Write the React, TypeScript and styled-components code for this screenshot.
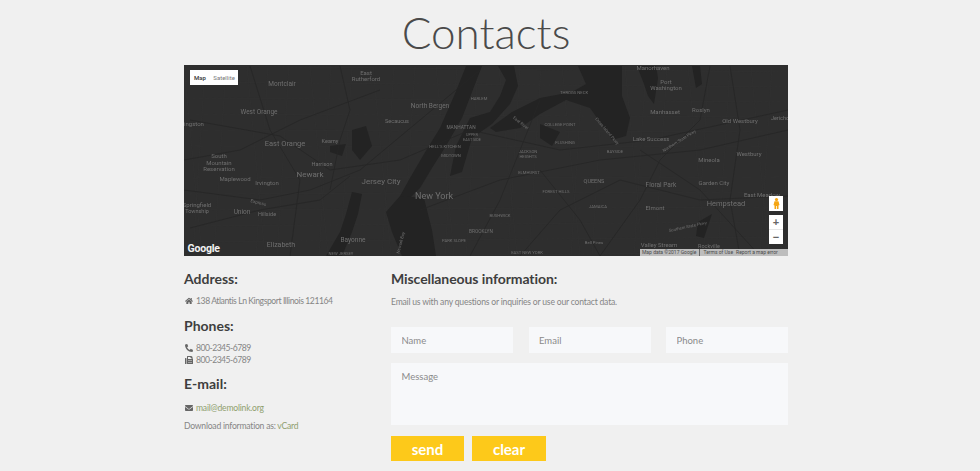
import React from "react";
import styled, { createGlobalStyle } from "styled-components";
import { FaHome, FaPhoneAlt, FaFax, FaEnvelope } from "react-icons/fa";

const Global = createGlobalStyle`
  html, body { margin: 0; padding: 0; background: #f0f0f0; }
  body { font-family: "Lato", "Liberation Sans", sans-serif; color: #7c7c7c; overflow: hidden; }
  * { box-sizing: border-box; }
`;

const Page = styled.div`
  width: 604px;
  margin: 0 auto;
  transform: translateX(-4px);
  height: 471px;
`;
const Title = styled.h1`
  margin: 0;
  height: 65px;
  padding-top: 4px;
  font-size: 44px;
  line-height: 56px;
  font-weight: 300;
  color: #4a4a4a;
  text-align: center;
`;
const MapBox = styled.div`
  position: relative;
  height: 191px;
  background: #2e2e2e;
  overflow: hidden;
`;
const MapSvg = styled.svg`
  display: block;
  width: 100%;
  height: 100%;
  filter: blur(0.35px);
`;
const TypeControl = styled.div`
  position: absolute;
  left: 6px;
  top: 5px;
  width: 48px;
  height: 15px;
  background: #fff;
  display: flex;
  align-items: center;
  font: 6px "Roboto", sans-serif;
`;
const TypeOption = styled.span<{ $active?: boolean }>`
  margin-left: ${(p) => (p.$active ? "4px" : "7.5px")};
  color: ${(p) => (p.$active ? "#333" : "#777")};
  font-weight: ${(p) => (p.$active ? 500 : 400)};
`;
const Logo = styled.span`
  position: absolute;
  left: 3.5px;
  bottom: 1px;
  font: 700 10.5px "Roboto", sans-serif;
  color: #f2f2f2;
  letter-spacing: -0.2px;
`;
const Attribution = styled.div`
  position: absolute;
  right: 0;
  bottom: 0;
  width: 148px;
  height: 7px;
  background: #bdbdbd;
  display: flex;
  align-items: center;
  gap: 3px;
  padding-left: 2px;
  font: 5px/7px "Roboto", sans-serif;
  color: #4a4a4a;
  white-space: nowrap;
`;
const Separator = styled.i`
  width: 1px;
  height: 7px;
  background: #666;
`;
const PegBox = styled.div`
  position: absolute;
  left: 585px;
  top: 131px;
  width: 14px;
  height: 15px;
  background: #fff;
  display: flex;
  align-items: center;
  justify-content: center;
`;
const ZoomBox = styled.div`
  position: absolute;
  left: 585px;
  top: 150px;
  width: 14px;
  height: 29px;
  background: #fff;
  display: flex;
  flex-direction: column;
  color: #666;
  font: 700 11px/14px "Liberation Sans", sans-serif;
  text-align: center;
`;
const ZoomBtn = styled.span`
  flex: 1;
  & + & { border-top: 1px solid #e6e6e6; }
`;
const Columns = styled.div`
  display: grid;
  grid-template-columns: 207px 397px;
  padding-top: 14px;
`;
const Heading = styled.h3<{ $gap?: number; $track?: number }>`
  margin: 0 0 ${(p) => p.$gap ?? 7}px;
  font-size: 14px;
  line-height: 18px;
  font-weight: 700;
  letter-spacing: ${(p) => p.$track ?? 0}px;
  color: #3e3e3e;
`;
const Line = styled.div<{ $track: number }>`
  display: flex;
  align-items: center;
  gap: 3px;
  font-size: 8.6px;
  line-height: 12px;
  letter-spacing: ${(p) => p.$track}px;
  color: #858585;
`;
const Group = styled.div<{ $gap: number }>`
  margin-bottom: ${(p) => p.$gap}px;
`;
const IconSlot = styled.span`
  display: inline-flex;
  width: 9px;
  justify-content: center;
  color: #666;
  font-size: 8px;
`;
const Link = styled.a`
  color: #8f9f6e;
`;
const Download = styled.div`
  margin-top: 6px;
  font-size: 8.6px;
  line-height: 12px;
  letter-spacing: -0.23px;
  color: #858585;
`;
const Intro = styled.p`
  margin: 0 0 19px;
  font-size: 8.6px;
  line-height: 12px;
  letter-spacing: -0.2px;
  color: #858585;
`;
const Fields = styled.div`
  display: grid;
  grid-template-columns: repeat(3, 122px);
  justify-content: space-between;
  margin-bottom: 10px;
`;
const Input = styled.input`
  height: 26px;
  width: 100%;
  border: 0;
  outline: 0;
  background: #f7f8fa;
  padding: 0 10.5px;
  font: 9.5px "Lato", sans-serif;
  &::placeholder { color: #8a8a8a; opacity: 1; }
`;
const Message = styled.textarea`
  display: block;
  width: 100%;
  height: 62px;
  border: 0;
  outline: 0;
  resize: none;
  background: #f7f8fa;
  padding: 8px 10.5px;
  font: 9.5px "Lato", sans-serif;
  &::placeholder { color: #8a8a8a; opacity: 1; }
`;
const Buttons = styled.div`
  display: flex;
  gap: 8px;
  margin-top: 11px;
`;
const Button = styled.button<{ $w: number }>`
  width: ${(p) => p.$w}px;
  height: 25px;
  border: 0;
  padding: 0;
  background: #fdc91a;
  color: #fff;
  font: 700 15px "Lato", sans-serif;
`;

type L = [string, number, number, number, number?];
const labels: L[] = [
  ["East", 366, 75, 6], ["Rutherford", 366, 81, 6], ["Montclair", 282, 86, 6.5], ["West Orange", 259, 114, 6.5],
  ["ingston", 194, 126, 6], ["North Bergen", 430, 108, 6.5], ["Secaucus", 397, 123, 5.5], ["HARLEM", 479, 100, 4.2],
  ["MANHATTAN", 461, 129, 4.8], ["UPPER", 472, 136, 3.8], ["EAST SIDE", 472, 141, 3.8], ["East Orange", 285, 146, 7.5],
  ["Kearny", 330, 143, 5.5], ["HELL'S KITCHEN", 445, 148, 4.2], ["MIDTOWN", 451, 157, 4.2], ["South", 219, 158, 6],
  ["Mountain", 219, 164.5, 6], ["Reservation", 219, 171, 6], ["Harrison", 322, 166, 5.5], ["Newark", 310, 177, 8],
  ["Maplewood", 235, 181, 6], ["Irvington", 267, 185, 6], ["Jersey City", 381, 184, 8], ["New York", 434, 199, 9],
  ["Springfield", 197, 207, 6], ["Township", 197, 213, 5.5], ["Union", 242, 214, 6.5], ["Hillside", 267, 216, 5.5],
  ["Elizabeth", 281, 247, 7], ["Bayonne", 353, 242, 6.5], ["PARK SLOPE", 454, 242, 4.2], ["BROOKLYN", 481, 233, 4.8],
  ["NEW JERSEY", 341, 255, 4.2], ["Manorhaven", 653, 70, 6], ["Port", 666, 83.5, 6], ["Washington", 666, 90, 6],
  ["THROGS NECK", 574, 94, 4.2], ["Manhasset", 665, 114, 6], ["Roslyn", 701, 112, 6], ["Old Westbury", 740, 123, 6],
  ["Jericho", 780, 120, 5.5], ["COLLEGE POINT", 560, 126, 4.2], ["FLUSHING", 565, 144, 4.2], ["Lake Success", 651, 141, 6],
  ["JACKSON", 528, 153, 4.2], ["HEIGHTS", 528, 158, 4.2], ["BAYSIDE", 615, 153, 4.2], ["Mineola", 709, 162, 6],
  ["Westbury", 749, 156, 6], ["ELMHURST", 529, 174, 4.2], ["QUEENS", 594, 183, 5.5], ["Floral Park", 661, 187, 6.5],
  ["Garden City", 714, 185, 6], ["FOREST HILLS", 556, 193, 4.2], ["Hempstead", 726, 206, 7.5], ["East Meadow", 762, 197, 6],
  ["JAMAICA", 598, 208, 4.2], ["Elmont", 655, 210, 6], ["BUSHWICK", 500, 217, 4.2], ["Bell Pines", 594, 244, 4.2],
  ["Valley Stream", 659, 247, 6], ["Rockville", 709, 247.5, 5.5], ["EAST NEW YORK", 527, 254, 4.2],
  ["Express", 258, 204, 4.5, 15], ["East River", 520, 124, 4.2, 38], ["Cross Island Pkwy", 606, 132, 4.2, 50],
  ["Northern State Pkwy", 680, 142, 4.2, -32], ["Southern State Pkwy", 688, 228, 4.2, -12], ["Newark Bay", 402, 243, 4.2, -75],
];

const water = [
  "M466 66 L482 66 L472 92 L462 118 L446 146 L432 168 L420 188 L408 200 L400 196 L410 178 L424 154 L440 128 L454 96 Z",
  "M400 196 L424 198 L432 230 L436 256 L402 256 L392 232 L386 212 Z",
  "M352 192 L362 194 L358 214 L352 232 L342 256 L326 256 L340 232 L346 214 Z",
  "M578 66 L622 66 L622 96 L630 118 L626 136 L612 140 L600 122 L590 108 L566 100 L540 114 L520 128 L496 132 L490 128 L512 112 L540 98 L572 92 L586 84 Z",
  "M470 118 L490 112 L500 96 L506 80 L498 66 L514 66 L518 86 L510 104 L492 124 L472 138 L462 172 L450 176 L456 146 Z",
  "M637 66 L656 66 L658 78 L654 104 L648 96 L644 84 Z",
  "M692 66 L700 66 L702 84 L696 88 Z",
  "M540 124 L560 132 L552 146 L540 138 Z",
  "M330 146 L346 144 L342 156 L330 152 Z",
  "M352 130 L366 126 L372 146 L360 160 L352 150 Z",
  "M698 222 L712 214 L704 238 L696 236 Z",
];

const roads = [
  "M190 120 L280 136 L330 170 L400 160 L470 130 L560 150 L650 140 L788 110",
  "M184 190 L260 200 L310 190 L360 170 L420 120 L480 70",
  "M250 66 L270 130 L300 180 L290 256",
  "M190 228 L260 210 L320 200 L350 176",
  "M420 210 L500 180 L600 160 L700 150 L788 130",
  "M600 256 L640 200 L660 160 L700 120 L710 66",
  "M520 256 L560 210 L620 180 L700 200 L788 196",
  "M640 150 L700 190 L760 256",
  "M340 66 L350 110 L340 140 L330 190",
  "M184 160 L240 150 L300 120 L380 90",
  "M730 66 L740 130 L730 200 L740 256",
  "M540 170 L580 220 L600 256",
  "M470 256 L500 200 L520 150 L540 100",
];

const grid = Array.from({ length: 30 }, (_, i) => `M${184 + i * 21} 66 l${i % 3 === 0 ? 18 : -12} 190`);
const gridH = Array.from({ length: 13 }, (_, i) => `M184 ${66 + i * 16} L788 ${72 + i * 15}`);

export default function App() {
  return (
    <Page>
      <Global />
      <Title>Contacts</Title>
      <MapBox>
        <MapSvg viewBox="184 65 604 191" preserveAspectRatio="none" fontFamily="Roboto, sans-serif">
          <g stroke="#333333" strokeWidth="0.5" fill="none">
            {grid.map((d) => <path key={d} d={d} />)}
            {gridH.map((d) => <path key={d} d={d} />)}
          </g>
          <g fill="#232323">
            {water.map((d) => <path key={d} d={d} />)}
          </g>
          <g stroke="#262626" strokeWidth="0.8" fill="none">
            {roads.map((d) => <path key={d} d={d} />)}
          </g>
          <g fill="#707070" textAnchor="middle">
            {labels.map(([t, x, y, s, r]) => (
              <text key={t} x={x} y={y} fontSize={s} transform={r ? `rotate(${r} ${x} ${y})` : undefined}>{t}</text>
            ))}
          </g>
        </MapSvg>
        <TypeControl>
          <TypeOption $active>Map</TypeOption>
          <TypeOption>Satellite</TypeOption>
        </TypeControl>
        <Logo>Google</Logo>
        <Attribution>
          <span>Map data ©2017 Google</span>
          <Separator />
          <span>Terms of Use</span>
          <span>Report a map error</span>
        </Attribution>
        <PegBox>
          <svg width="7" height="11" viewBox="0 0 6 11">
            <circle cx="3" cy="1.6" r="1.6" fill="#f5a511" />
            <path d="M1 3.2h4l1 3.8-1 .4V11H3.4V8h-.8v3H1V7.4L0 7z" fill="#f5a511" />
          </svg>
        </PegBox>
        <ZoomBox>
          <ZoomBtn>+</ZoomBtn>
          <ZoomBtn>−</ZoomBtn>
        </ZoomBox>
      </MapBox>
      <Columns>
        <div>
          <Group $gap={10}>
            <Heading>Address:</Heading>
            <Line $track={-0.42}><IconSlot><FaHome /></IconSlot>138 Atlantis Ln Kingsport Illinois 121164</Line>
          </Group>
          <Group $gap={9}>
            <Heading>Phones:</Heading>
            <Line $track={-0.5}><IconSlot><FaPhoneAlt /></IconSlot>800-2345-6789</Line>
            <Line $track={-0.5}><IconSlot><FaFax /></IconSlot>800-2345-6789</Line>
          </Group>
          <Heading $gap={9}>E-mail:</Heading>
          <Line $track={-0.22}><IconSlot><FaEnvelope /></IconSlot><Link>mail@demolink.org</Link></Line>
          <Download>Download information as: <Link>vCard</Link></Download>
        </div>
        <div>
          <Heading $gap={8} $track={-0.08}>Miscellaneous information:</Heading>
          <Intro>Email us with any questions or inquiries or use our contact data.</Intro>
          <Fields>
            <Input placeholder="Name" />
            <Input placeholder="Email" />
            <Input placeholder="Phone" />
          </Fields>
          <Message placeholder="Message" />
          <Buttons>
            <Button $w={73}>send</Button>
            <Button $w={74}>clear</Button>
          </Buttons>
        </div>
      </Columns>
    </Page>
  );
}
